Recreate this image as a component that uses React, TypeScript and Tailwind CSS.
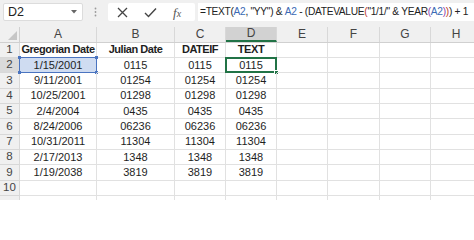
import React from "react";

const cols = [
  { k: "A", w: 77 },
  { k: "B", w: 78 },
  { k: "C", w: 51 },
  { k: "D", w: 51 },
  { k: "E", w: 51 },
  { k: "F", w: 52 },
  { k: "G", w: 51 },
  { k: "H", w: 51 },
];

const data: string[][] = [
  ["Gregorian Date", "Julian Date", "DATEIF", "TEXT"],
  ["1/15/2001", "0115", "0115", "0115"],
  ["9/11/2001", "01254", "01254", "01254"],
  ["10/25/2001", "01298", "01298", "01298"],
  ["2/4/2004", "0435", "0435", "0435"],
  ["8/24/2006", "06236", "06236", "06236"],
  ["10/31/2011", "11304", "11304", "11304"],
  ["2/17/2013", "1348", "1348", "1348"],
  ["1/19/2038", "3819", "3819", "3819"],
  ["", "", "", ""],
];

const font = { fontFamily: '"Liberation Sans", Arial, sans-serif' };

export default function App() {
  return (
    <div className="w-[474px] h-[200px] overflow-hidden bg-white flex flex-col" style={font}>
      {/* formula bar */}
      <div className="shrink-0 h-[27px] bg-[#f0f0f0] flex items-start pt-[3px]">
        <div className="shrink-0 ml-[3px] w-[80px] h-[18px] bg-white border border-[#dcdcdc] rounded-[2px] flex items-center justify-between pl-[4px] pr-[5px]">
          <span className="text-[12.5px] text-[#222] leading-none">D2</span>
          <svg width="6" height="4" viewBox="0 0 6 4"><path d="M0 0h6L3 3.5z" fill="#666" /></svg>
        </div>
        <div className="shrink-0 w-[25px] h-[18px] flex items-center justify-center">
          <svg width="3" height="10" viewBox="0 0 3 10">
            <circle cx="1.5" cy="1.5" r="0.9" fill="#9a9a9a" />
            <circle cx="1.5" cy="5" r="0.9" fill="#9a9a9a" />
            <circle cx="1.5" cy="8.5" r="0.9" fill="#9a9a9a" />
          </svg>
        </div>
        <div className="shrink-0 w-[87px] h-[18px] bg-white rounded-[2px] flex items-center pl-[9px] gap-[16px]">
          <svg width="11" height="11" viewBox="0 0 11 11"><path d="M1 1L10 10M10 1L1 10" stroke="#444" strokeWidth="1.3" /></svg>
          <svg width="13" height="11" viewBox="0 0 13 11"><path d="M1 6L4.5 9.5L12 1.5" stroke="#444" strokeWidth="1.4" fill="none" /></svg>
          <span className="text-[13px] italic text-[#555] leading-none" style={{ fontFamily: '"Liberation Serif", serif' }}>
            f<span className="text-[10px]">x</span>
          </span>
        </div>
        <div className="ml-[3px] flex-1 min-w-0 overflow-hidden h-[18px] bg-white flex items-center pl-[2px] whitespace-nowrap text-[10.2px] text-[#222] tracking-[-0.3px]">
          <span>=TEXT(</span>
          <span className="text-[#3b6ab5]">A2</span>
          <span className="whitespace-pre">, "YY") &amp; </span>
          <span className="text-[#3b6ab5]">A2</span>
          <span className="whitespace-pre"> - (DATEVALUE</span>
          <span className="text-[#c0392b]">(</span>
          <span className="whitespace-pre">"1/1/" &amp; YEAR</span>
          <span className="text-[#8e44ad]">(</span>
          <span className="text-[#3b6ab5]">A2</span>
          <span className="text-[#8e44ad]">)</span>
          <span className="text-[#c0392b]">)</span>
          <span className="whitespace-pre">) + 1</span>
        </div>
      </div>

      {/* column header row */}
      <div className="shrink-0 flex h-[15.5px] bg-[#f0f0f0] border-b border-[#d0d0d0]">
        <div className="w-[20px] shrink-0 relative border-r border-[#d0d0d0]">
          <svg className="absolute right-[2px] bottom-[2px]" width="9" height="9" viewBox="0 0 9 9"><path d="M9 0V9H0z" fill="#c6c6c6" /></svg>
        </div>
        {cols.map((c) => (
          <div
            key={c.k}
            style={{ width: c.w }}
            className={`shrink-0 flex items-center justify-center text-[12px] text-[#444] border-r border-[#d8d8d8] ${
              c.k === "D" ? "bg-[#d2d2d2] border-b-2 border-b-[#217346]" : ""
            }`}
          >
            {c.k}
          </div>
        ))}
      </div>

      {/* rows */}
      {data.map((row, ri) => (
        <div key={ri} className="shrink-0 flex h-[15.35px]">
          <div
            className={`w-[20px] shrink-0 flex items-center justify-center text-[11.5px] text-[#444] border-r border-b border-[#d8d8d8] ${
              ri === 1 ? "bg-[#dadada] border-r-[#217346]" : "bg-[#f0f0f0]"
            }`}
          >
            {ri + 1}
          </div>
          {cols.map((c, ci) => {
            const v = row[ci] ?? "";
            const isA2 = ri === 1 && ci === 0;
            const isD2 = ri === 1 && ci === 3;
            return (
              <div
                key={c.k}
                style={{ width: c.w }}
                className={`shrink-0 relative flex items-center justify-center text-[11px] text-[#1e1e1e] border-r border-b border-[#e1e1e1] ${
                  ri === 0 ? "font-bold tracking-[-0.45px]" : ""
                } ${isA2 ? "bg-[#cfdcf1]" : ""}`}
              >
                {v}
                {isA2 && (
                  <div className="absolute left-[-1px] top-[-1px] right-[-1px] bottom-[-1px] border border-[#4a74c0]">
                    <div className="absolute left-[-2px] top-[-2px] w-[3px] h-[3px] bg-[#4a74c0]" />
                    <div className="absolute right-[-2px] top-[-2px] w-[3px] h-[3px] bg-[#4a74c0]" />
                    <div className="absolute left-[-2px] bottom-[-2px] w-[3px] h-[3px] bg-[#4a74c0]" />
                    <div className="absolute right-[-2px] bottom-[-2px] w-[3px] h-[3px] bg-[#4a74c0]" />
                  </div>
                )}
                {isD2 && (
                  <div className="absolute left-[-1px] top-[-1px] right-[-1px] bottom-[-1px] border-2 border-[#217346]">
                    <div className="absolute right-[-4px] bottom-[-4px] w-[5px] h-[5px] bg-[#217346] border border-white" />
                  </div>
                )}
              </div>
            );
          })}
        </div>
      ))}
      <div className="shrink-0 flex h-[10px]">
        <div className="w-[20px] shrink-0 bg-[#f0f0f0] border-r border-[#d8d8d8]" />
        {cols.map((c) => (
          <div key={c.k} style={{ width: c.w }} className="shrink-0 border-r border-[#e1e1e1]" />
        ))}
      </div>
    </div>
  );
}
